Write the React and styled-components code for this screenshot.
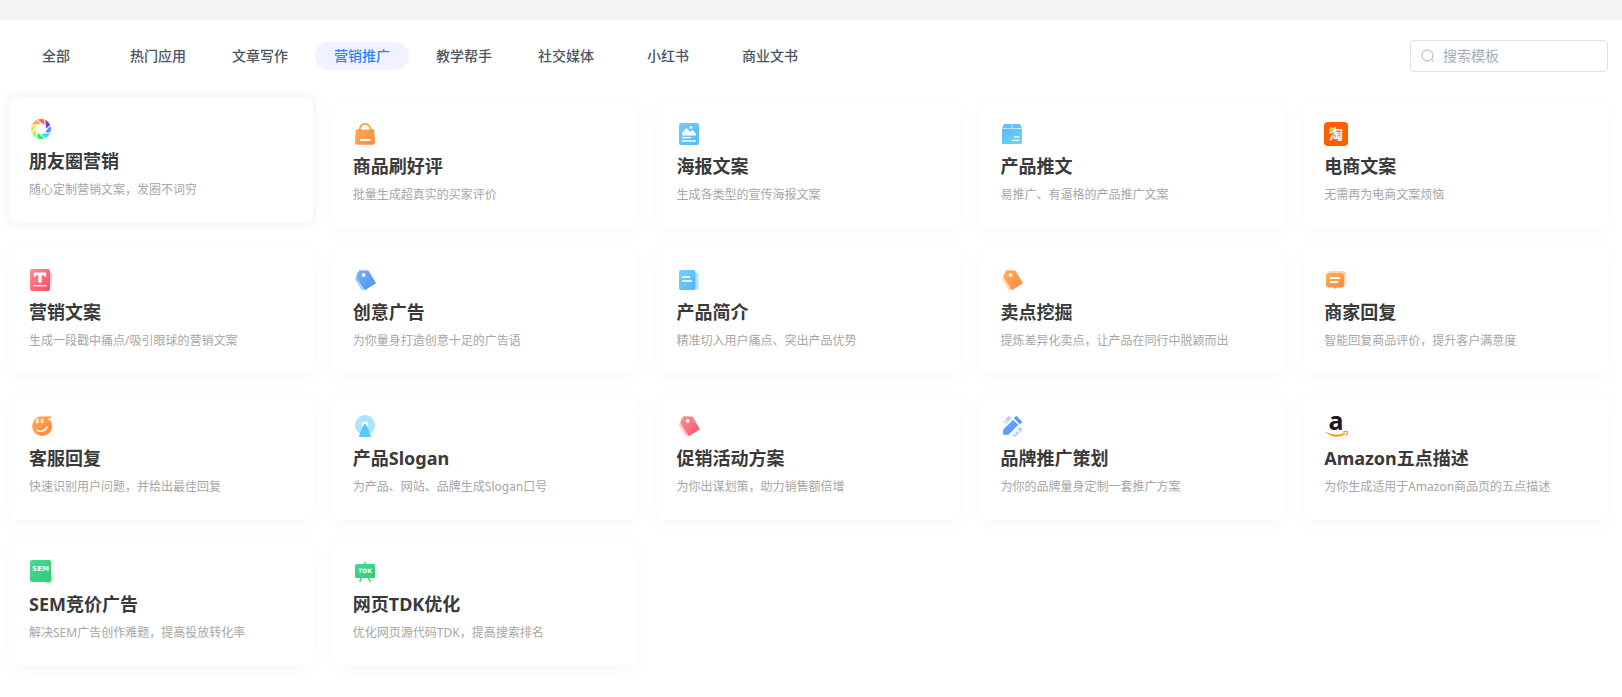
import React, { useState } from "react";
import styled, { createGlobalStyle } from "styled-components";

const GlobalStyle = createGlobalStyle`
  * {
    box-sizing: border-box;
  }
  body {
    margin: 0;
    background-color: #fff;
    font-family: "Noto Sans", "Noto Sans CJK SC", sans-serif;
  }
`;
const TopStrip = styled.div`
  height: 20px;
  background-color: #f3f4f6;
`;
const Page = styled.main`
  padding: 20px 14px 30px 9px;
`;
const Toolbar = styled.header`
  display: flex;
  align-items: center;
  justify-content: space-between;
  margin-bottom: 30px;
`;
const Tabs = styled.nav`
  display: flex;
  gap: 8px;
`;
const Tab = styled.button`
  width: 94px;
  height: 28px;
  padding: 0;
  border: none;
  border-radius: 14px;
  background-color: ${(props) => (props.$active ? "#f0f3ff" : "transparent")};
  color: ${(props) => (props.$active ? "#2b85f6" : "#4b5563")};
  font-family: inherit;
  font-size: 14px;
  font-weight: 500;
  line-height: 28px;
  cursor: pointer;
`;
const SearchBox = styled.label`
  display: flex;
  align-items: center;
  gap: 8px;
  width: 198px;
  height: 32px;
  padding: 0 10px;
  border: 1px solid #dcdfe6;
  border-radius: 4px;
  color: #a8abb2;
`;
const SearchInput = styled.input`
  flex: 1;
  min-width: 0;
  padding: 0;
  border: none;
  outline: none;
  background: transparent;
  color: #606266;
  font-family: inherit;
  font-size: 14px;
  line-height: 20px;
  &::placeholder {
    color: #a8abb2;
    opacity: 1;
  }
`;
const CardGrid = styled.section`
  display: grid;
  grid-template-columns: repeat(5, minmax(0, 1fr));
  gap: 20px;
`;
const Card = styled.a`
  display: flex;
  flex-direction: column;
  align-items: flex-start;
  min-height: 126px;
  padding: 20px;
  border-radius: 8px;
  background-color: #fff;
  box-shadow: ${(props) =>
    props.$raised
      ? "0 0 12px rgba(43, 120, 255, 0.12)"
      : "0 4px 16px rgba(0, 0, 0, 0.03)"};
  transform: ${(props) => (props.$raised ? "translateY(-5px)" : "none")};
  text-decoration: none;
`;
const CardTitle = styled.h3`
  margin: 7px 0 0;
  color: #3a3a3a;
  font-size: 18px;
  font-weight: 700;
  line-height: 26px;
`;
const CardText = styled.p`
  margin: 7px 0 0;
  color: #a6a6a6;
  font-size: 12px;
  line-height: 18px;
`;
const IconSvg = styled.svg`
  display: block;
  width: 24px;
  height: 24px;
  flex-shrink: 0;
  overflow: visible;
`;

const Icon = ({ id, from, to, children }) => (
  <IconSvg viewBox="0 0 24 24" aria-hidden="true">
    {id && (
      <defs>
        <linearGradient id={id} x1="0" y1="0" x2="1" y2="1">
          <stop offset="0" stopColor={from} />
          <stop offset="1" stopColor={to} />
        </linearGradient>
      </defs>
    )}
    {children}
  </IconSvg>
);

const SearchIcon = () => (
  <svg width="14" height="14" viewBox="0 0 14 14" fill="none" stroke="currentColor" aria-hidden="true">
    <circle cx="6.5" cy="6.5" r="5.5" />
    <path d="M10.5 10.5l2.3 2.3" />
  </svg>
);

const BLADES = ["#fb6a4a", "#7434ef", "#5590f2", "#1fe3fb", "#08f95c", "#a4fb5f", "#f3e04e", "#f9ac55"];

const ApertureIcon = () => (
  <Icon>
    {BLADES.map((color, i) => (
      <path
        key={color}
        d="M8.4 2.6A10 10 0 0 1 15.5 2.5L15.5 8.3Z"
        fill={color}
        stroke="#fff"
        strokeWidth="0.2"
        transform={`rotate(${i * 45} 12 12)`}
      />
    ))}
  </Icon>
);

const BagIcon = () => (
  <Icon id="bag" from="#ffb04f" to="#ff8648">
    <path d="M4.5 7h15a2 2 0 0 1 1.8 1.7L22 20a2.6 2.6 0 0 1-2.6 2.8H4.6A2.6 2.6 0 0 1 2 20L2.7 8.7A2 2 0 0 1 4.5 7z" fill="url(#bag)" />
    <path d="M8 7.5a4 4 0 0 1 8 0z" fill="#fff" />
    <path d="M6.8 11V6.800a5.200 5 0 0 1 10.400 0V11" fill="none" stroke="#ff983c" strokeWidth="1.7" />
    <rect x="7" y="17" width="10.5" height="2" rx="0.5" fill="#fff" />
  </Icon>
);

const PosterIcon = () => (
  <Icon id="poster" from="#69d2fd" to="#58b8fe">
    <rect x="2" y="1" width="20" height="22" rx="2" fill="url(#poster)" />
    <path d="M5 13.5V11l4.5-5 3.5 4 2.500-2L19 12v1.5z" fill="#fff" />
    <circle cx="14" cy="5.500" r="1.300" fill="#fff" />
    <rect x="5" y="15" width="9" height="1.3" fill="#fff" />
    <rect x="5" y="18" width="14" height="2" fill="#fff" opacity="0.75" />
  </Icon>
);

const BoxIcon = () => (
  <Icon id="box" from="#5abafe" to="#6bd6fd">
    <path d="M4 2h16l2 4.5H2z" fill="#5fc2fe" />
    <rect x="2" y="6.5" width="20" height="15.5" rx="0.8" fill="url(#box)" />
    <path d="M12 2v4.500M2 6.500h20" stroke="#c5ebff" strokeWidth="0.9" />
    <path d="M14 14.8h5M12 18.3h7" stroke="#fff" strokeWidth="1.2" />
  </Icon>
);

const TaoIcon = () => (
  <Icon>
    <rect width="24" height="24" rx="4" fill="#ff5f00" />
    <text x="12" y="17" fill="#fff" fontSize="14" fontWeight="700" textAnchor="middle">
      淘
    </text>
    <circle cx="6.5" cy="7.5" r="1.5" fill="#ffd500" />
  </Icon>
);

const TextIcon = () => (
  <Icon id="text" from="#ff8d9b" to="#fe4a5c">
    <path d="M20.5 4.5l3 .8-1.6 15z" fill="#ffc3cb" />
    <rect x="1" y="1" width="20" height="22" rx="2" fill="url(#text)" />
    <path d="M4.800 4.500h12.400v4h-2V7.200h-2.500v7.300h-3.400V7.200H6.800v1.300h-2z" fill="#fff" />
    <rect x="4" y="17" width="14" height="1.3" fill="#fff" />
  </Icon>
);

const TagIcon = ({ id, from, to, back }) => (
  <Icon id={id} from={from} to={to}>
    <path d="M4.500 3.500L2 11l6.500 11 2.500.3L7 7z" fill={back} />
    <path d="M6.2 2.3l8.3.1a1.5 1.5 0 0 1 1.200.6L23 15.300 11.800 22.300 3.500 9.200z" fill={`url(#${id})`} />
    <circle cx="10.600" cy="7" r="1.900" fill="#fff" />
  </Icon>
);

const DocIcon = () => (
  <Icon id="doc" from="#6dd5fd" to="#55b3fe">
    <path d="M17 4.500h3A1.500 1.500 0 0 1 21.500 6v14a1.500 1.500 0 0 1-1.500 1.500H17z" fill="#abe3fe" />
    <rect x="2" y="2" width="16.500" height="20" rx="2" fill="url(#doc)" />
    <path d="M5 9h8M5 13h10" stroke="#fff" strokeWidth="1.300" />
  </Icon>
);

const ChatIcon = () => (
  <Icon id="chat" from="#ffb04f" to="#ff8648">
    <rect x="4" y="3" width="18" height="15" rx="3" fill="#ffd5ad" />
    <path d="M4.500 5h13A2.500 2.500 0 0 1 20 7.500V17a2.500 2.500 0 0 1-2.500 2.500h-5l-1.300 1.600-1.400-1.600H4.500A2.500 2.500 0 0 1 2 17V7.500A2.500 2.500 0 0 1 4.500 5z" fill="url(#chat)" />
    <path d="M6 10h10M6 14h8" stroke="#fff" strokeWidth="1.800" />
  </Icon>
);

const SmileIcon = () => (
  <Icon id="smile" from="#ffb04f" to="#ff8140">
    <circle cx="14" cy="12.500" r="9.500" fill="#ffd5b0" />
    <path d="M10.500 2.500H18l4-.3-1.300 3.600A9.800 9.800 0 1 1 10.500 2.500z" fill="url(#smile)" />
    <path d="M8.200 16.300q5.800 3 10-3.300" fill="none" stroke="#fff" strokeWidth="1.500" strokeLinecap="round" />
    <ellipse cx="8.500" cy="7" rx="1.500" ry="2.200" fill="#fff" />
    <ellipse cx="13.200" cy="7" rx="1.500" ry="2.200" fill="#fff" />
    <circle cx="9.200" cy="7" r="0.800" fill="#ff9c48" />
    <circle cx="13.900" cy="7" r="0.800" fill="#ff9c48" />
    <path d="M18.500 5l2.500-1v3z" fill="#fff" />
  </Icon>
);

const SignalIcon = () => (
  <Icon id="signal" from="#5fb8fd" to="#5cd2fe">
    <circle cx="12" cy="11" r="10" fill="#a9e5fe" />
    <circle cx="12" cy="11" r="3.300" fill="#fff" />
    <path d="M12 10q1.200 0 1.800 1.700L18 22a.8.8 0 0 1-.8 1H6.800a.8.8 0 0 1-.8-1l4.200-10.300Q10.800 10 12 10z" fill="url(#signal)" />
  </Icon>
);

const PencilIcon = () => (
  <Icon id="pencil" from="#74acf9" to="#4c90f5">
    <path d="M2.500 8.500L8 2.500q1-1 2 0l1.500 1.500-5.500 6-1-1 2.500-2.500-1-1-3 3z" fill="#acd0fd" />
    <path d="M19.500 12.800l2 2q1 1 0 2l-5.500 5.500q-1 .8-2 0l-1.500-1.500 1.300-1.300 1.500 1.500 1.200-1.200-1.500-1.500 1.200-1.200 2 2 1.500-1.500-2.500-2.500z" fill="#acd0fd" />
    <path d="M13 5.700l5.300 5.300-10 9.700H3.600a.6.6 0 0 1-.6-.6v-4.400z" fill="url(#pencil)" />
    <path d="M15.500 2.500q.8-.8 1.600 0l4.500 4.500q.8.800 0 1.600l-1.800 1.800-6-6.200z" fill="#5d9cf7" />
  </Icon>
);

const AmazonIcon = () => (
  <Icon>
    <text x="12" y="15.500" fill="#1a1a1a" fontFamily="Noto Sans" fontSize="25" fontWeight="700" textAnchor="middle">
      a
    </text>
    <path d="M.3 17.300Q11 23.500 21 18.700l.8 1Q11.500 27 .3 17.300z" fill="#ff9900" />
    <path d="M18.800 18.200q3-1.500 4.600-.6.300 2.300-1.500 4.300" fill="none" stroke="#ff9900" strokeWidth="1.200" />
  </Icon>
);

const SemIcon = () => (
  <Icon id="sem" from="#43dc93" to="#35c876">
    <circle cx="19.500" cy="19.500" r="4.500" fill="#b5f0d2" />
    <rect x="1" y="0" width="21" height="22" rx="2" fill="url(#sem)" />
    <text x="11.500" y="11" fill="#fff" fontFamily="DejaVu Sans" fontSize="7" fontWeight="700" textAnchor="middle">
      SEM
    </text>
  </Icon>
);

const TdkIcon = () => (
  <Icon id="tdk" from="#43dc93" to="#35c876">
    <path d="M12 2v3M9 17l-2.300 5M15 17l2.300 5" stroke="#3ccf80" strokeWidth="1.500" />
    <rect x="2" y="4" width="20" height="14" rx="1.500" fill="url(#tdk)" />
    <text x="12" y="13" fill="#fff" fontFamily="DejaVu Sans" fontSize="6" fontWeight="700" textAnchor="middle">
      TDK
    </text>
  </Icon>
);

const TABS = ["全部", "热门应用", "文章写作", "营销推广", "教学帮手", "社交媒体", "小红书", "商业文书"];

const TEMPLATES = [
  { title: "朋友圈营销", text: "随心定制营销文案，发圈不词穷", icon: <ApertureIcon />, raised: true },
  { title: "商品刷好评", text: "批量生成超真实的买家评价", icon: <BagIcon /> },
  { title: "海报文案", text: "生成各类型的宣传海报文案", icon: <PosterIcon /> },
  { title: "产品推文", text: "易推广、有逼格的产品推广文案", icon: <BoxIcon /> },
  { title: "电商文案", text: "无需再为电商文案烦恼", icon: <TaoIcon /> },
  { title: "营销文案", text: "生成一段戳中痛点/吸引眼球的营销文案", icon: <TextIcon /> },
  { title: "创意广告", text: "为你量身打造创意十足的广告语", icon: <TagIcon id="tag-blue" from="#74b0fa" to="#4a8ff5" back="#aed0fd" /> },
  { title: "产品简介", text: "精准切入用户痛点、突出产品优势", icon: <DocIcon /> },
  { title: "卖点挖掘", text: "提炼差异化卖点，让产品在同行中脱颖而出", icon: <TagIcon id="tag-orange" from="#ffb04f" to="#ff8648" back="#ffd9b8" /> },
  { title: "商家回复", text: "智能回复商品评价，提升客户满意度", icon: <ChatIcon /> },
  { title: "客服回复", text: "快速识别用户问题，并给出最佳回复", icon: <SmileIcon /> },
  { title: "产品Slogan", text: "为产品、网站、品牌生成Slogan口号", icon: <SignalIcon /> },
  { title: "促销活动方案", text: "为你出谋划策，助力销售额倍增", icon: <TagIcon id="tag-red" from="#ff8d9b" to="#fe5365" back="#ffc9d0" /> },
  { title: "品牌推广策划", text: "为你的品牌量身定制一套推广方案", icon: <PencilIcon /> },
  { title: "Amazon五点描述", text: "为你生成适用于Amazon商品页的五点描述", icon: <AmazonIcon /> },
  { title: "SEM竞价广告", text: "解决SEM广告创作难题，提高投放转化率", icon: <SemIcon /> },
  { title: "网页TDK优化", text: "优化网页源代码TDK，提高搜索排名", icon: <TdkIcon /> },
];

const App = () => {
  const [active, setActive] = useState("营销推广");

  return (
    <>
      <GlobalStyle />
      <TopStrip />
      <Page>
        <Toolbar>
          <Tabs>
            {TABS.map((name) => (
              <Tab key={name} type="button" $active={name === active} onClick={() => setActive(name)}>
                {name}
              </Tab>
            ))}
          </Tabs>
          <SearchBox>
            <SearchIcon />
            <SearchInput type="text" placeholder="搜索模板" aria-label="搜索模板" />
          </SearchBox>
        </Toolbar>
        <CardGrid>
          {TEMPLATES.map((item) => (
            <Card key={item.title} href="#" $raised={item.raised}>
              {item.icon}
              <CardTitle>{item.title}</CardTitle>
              <CardText>{item.text}</CardText>
            </Card>
          ))}
        </CardGrid>
      </Page>
    </>
  );
};

export default App;
